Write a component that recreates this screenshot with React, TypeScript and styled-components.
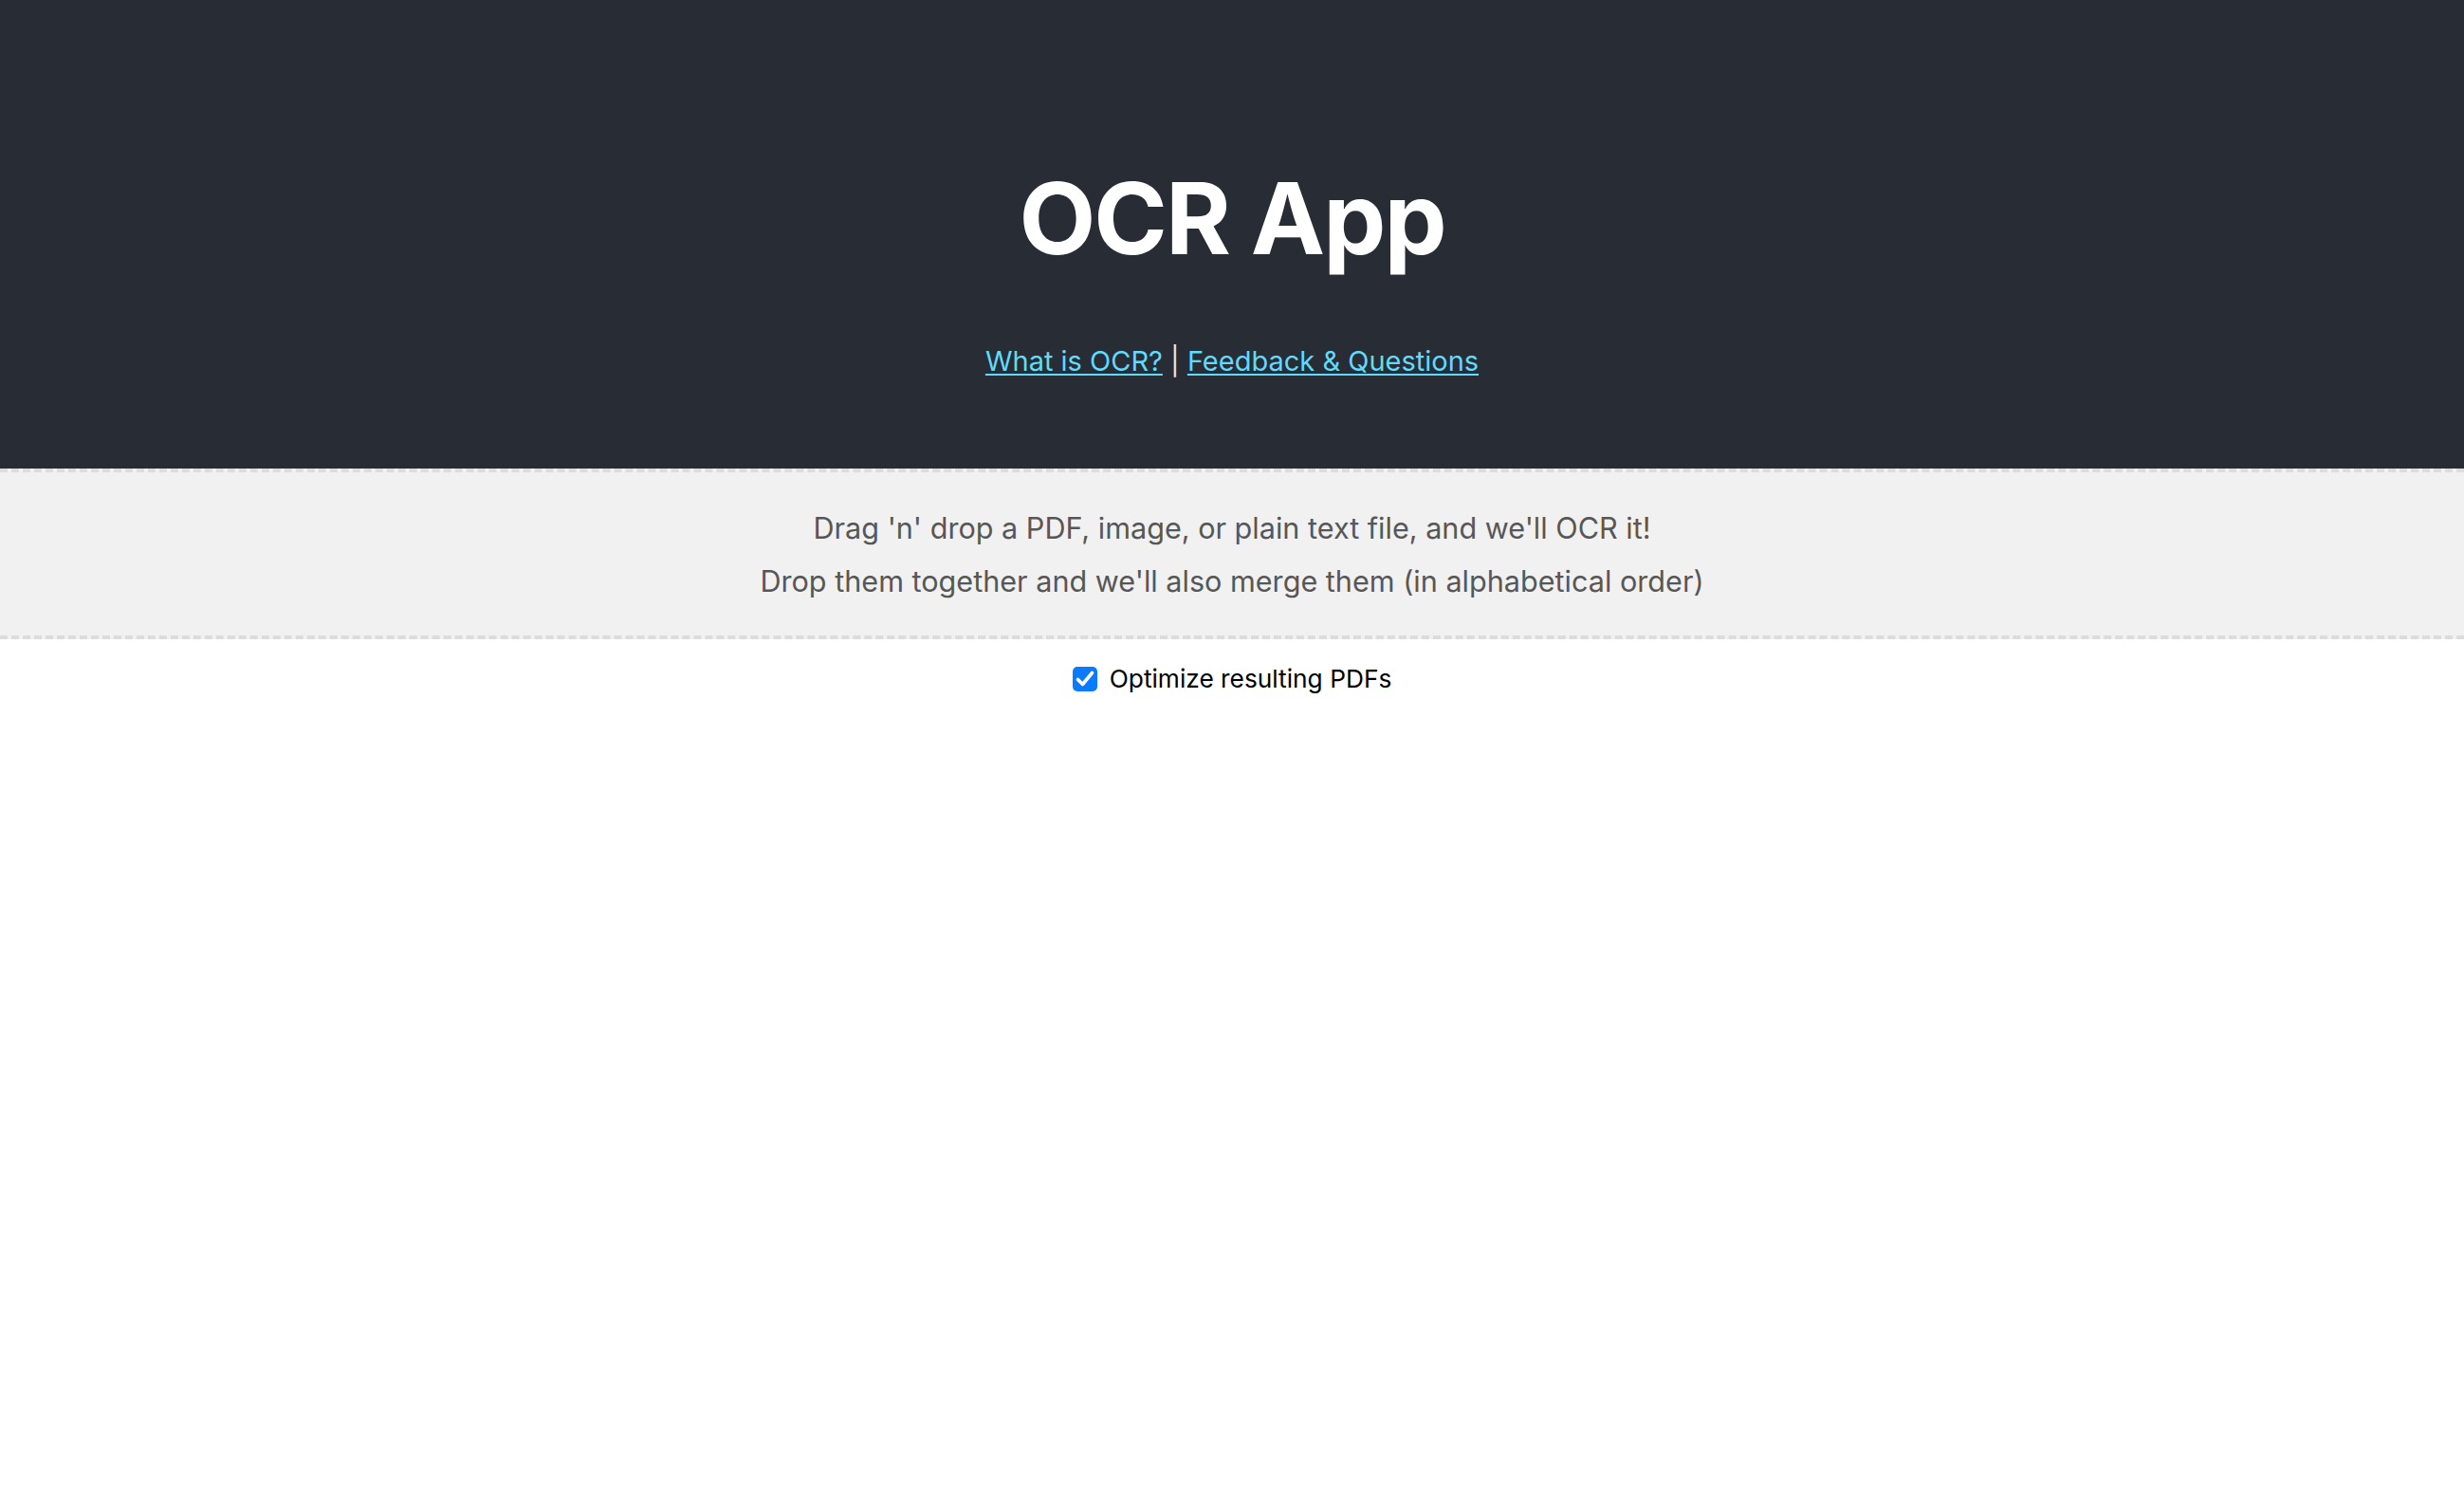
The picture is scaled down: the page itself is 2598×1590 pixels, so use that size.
import React from 'react';
import styled, { createGlobalStyle } from 'styled-components';

const GlobalStyle = createGlobalStyle`
  html, body {
    margin: 0;
    padding: 0;
    background: #ffffff;
  }
  body {
    font-family: Inter, "Noto Sans", "Liberation Sans", sans-serif;
    -webkit-font-smoothing: antialiased;
  }
`;

const Page = styled.div`
  min-height: 1590px;
  background: #ffffff;
`;

const Header = styled.header`
  height: 494px;
  box-sizing: border-box;
  padding-top: 166px;
  background: #282c34;
  color: #ffffff;
  display: flex;
  flex-direction: column;
  align-items: center;
`;

const Title = styled.h1`
  margin: 0;
  font-size: 105px;
  line-height: 128px;
  font-weight: 700;
  letter-spacing: -2px;
`;

const LinkRow = styled.p`
  margin: 69px 0 0;
  font-size: 29px;
  line-height: 36px;
  color: #e6e6e6;
  white-space: pre;
`;

const Link = styled.a`
  color: #61dafb;
  text-decoration: underline;
  text-underline-offset: 3px;
  text-decoration-thickness: 2px;
`;

const DropZone = styled.div`
  border-top: 4px dashed #dcdcdc;
  border-bottom: 4px dashed #dcdcdc;
  background: #f1f1f1;
  padding: 31px 0 29px;
  text-align: center;
  color: #575757;
  font-size: 30.6px;
  line-height: 56px;
  cursor: pointer;
`;

const DropLine = styled.p`
  margin: 0;
`;

const OptionRow = styled.label`
  display: flex;
  justify-content: center;
  align-items: center;
  gap: 13px;
  margin-top: 26px;
  font-size: 26.3px;
  line-height: 32px;
  color: #000000;
  cursor: pointer;
`;

const HiddenInput = styled.input`
  position: absolute;
  opacity: 0;
  width: 0;
  height: 0;
  margin: 0;
`;

const CheckBox = styled.span<{ checked: boolean }>`
  width: 26px;
  height: 26px;
  box-sizing: border-box;
  border-radius: 5px;
  background: ${(props) => (props.checked ? '#0a7bff' : '#ffffff')};
  border: ${(props) => (props.checked ? 'none' : '1px solid #9a9a9a')};
  display: flex;
  align-items: center;
  justify-content: center;
`;

export default function App() {
  const [optimize, setOptimize] = React.useState(true);

  return (
    <Page>
      <GlobalStyle />
      <Header>
        <Title>OCR App</Title>
        <LinkRow>
          <Link href="#what-is-ocr">What is OCR?</Link>
          {' | '}
          <Link href="#feedback">Feedback &amp; Questions</Link>
        </LinkRow>
      </Header>
      <DropZone>
        <DropLine>Drag 'n' drop a PDF, image, or plain text file, and we'll OCR it!</DropLine>
        <DropLine>Drop them together and we'll also merge them (in alphabetical order)</DropLine>
      </DropZone>
      <OptionRow>
        <HiddenInput
          type="checkbox"
          checked={optimize}
          onChange={(e) => setOptimize(e.target.checked)}
        />
        <CheckBox checked={optimize}>
          {optimize && (
            <svg width="26" height="26" viewBox="0 0 26 26">
              <path
                d="M5.5 13.5 L10.5 18.5 L20.5 6.5"
                fill="none"
                stroke="#ffffff"
                strokeWidth="3.6"
                strokeLinecap="round"
                strokeLinejoin="round"
              />
            </svg>
          )}
        </CheckBox>
        Optimize resulting PDFs
      </OptionRow>
    </Page>
  );
}
